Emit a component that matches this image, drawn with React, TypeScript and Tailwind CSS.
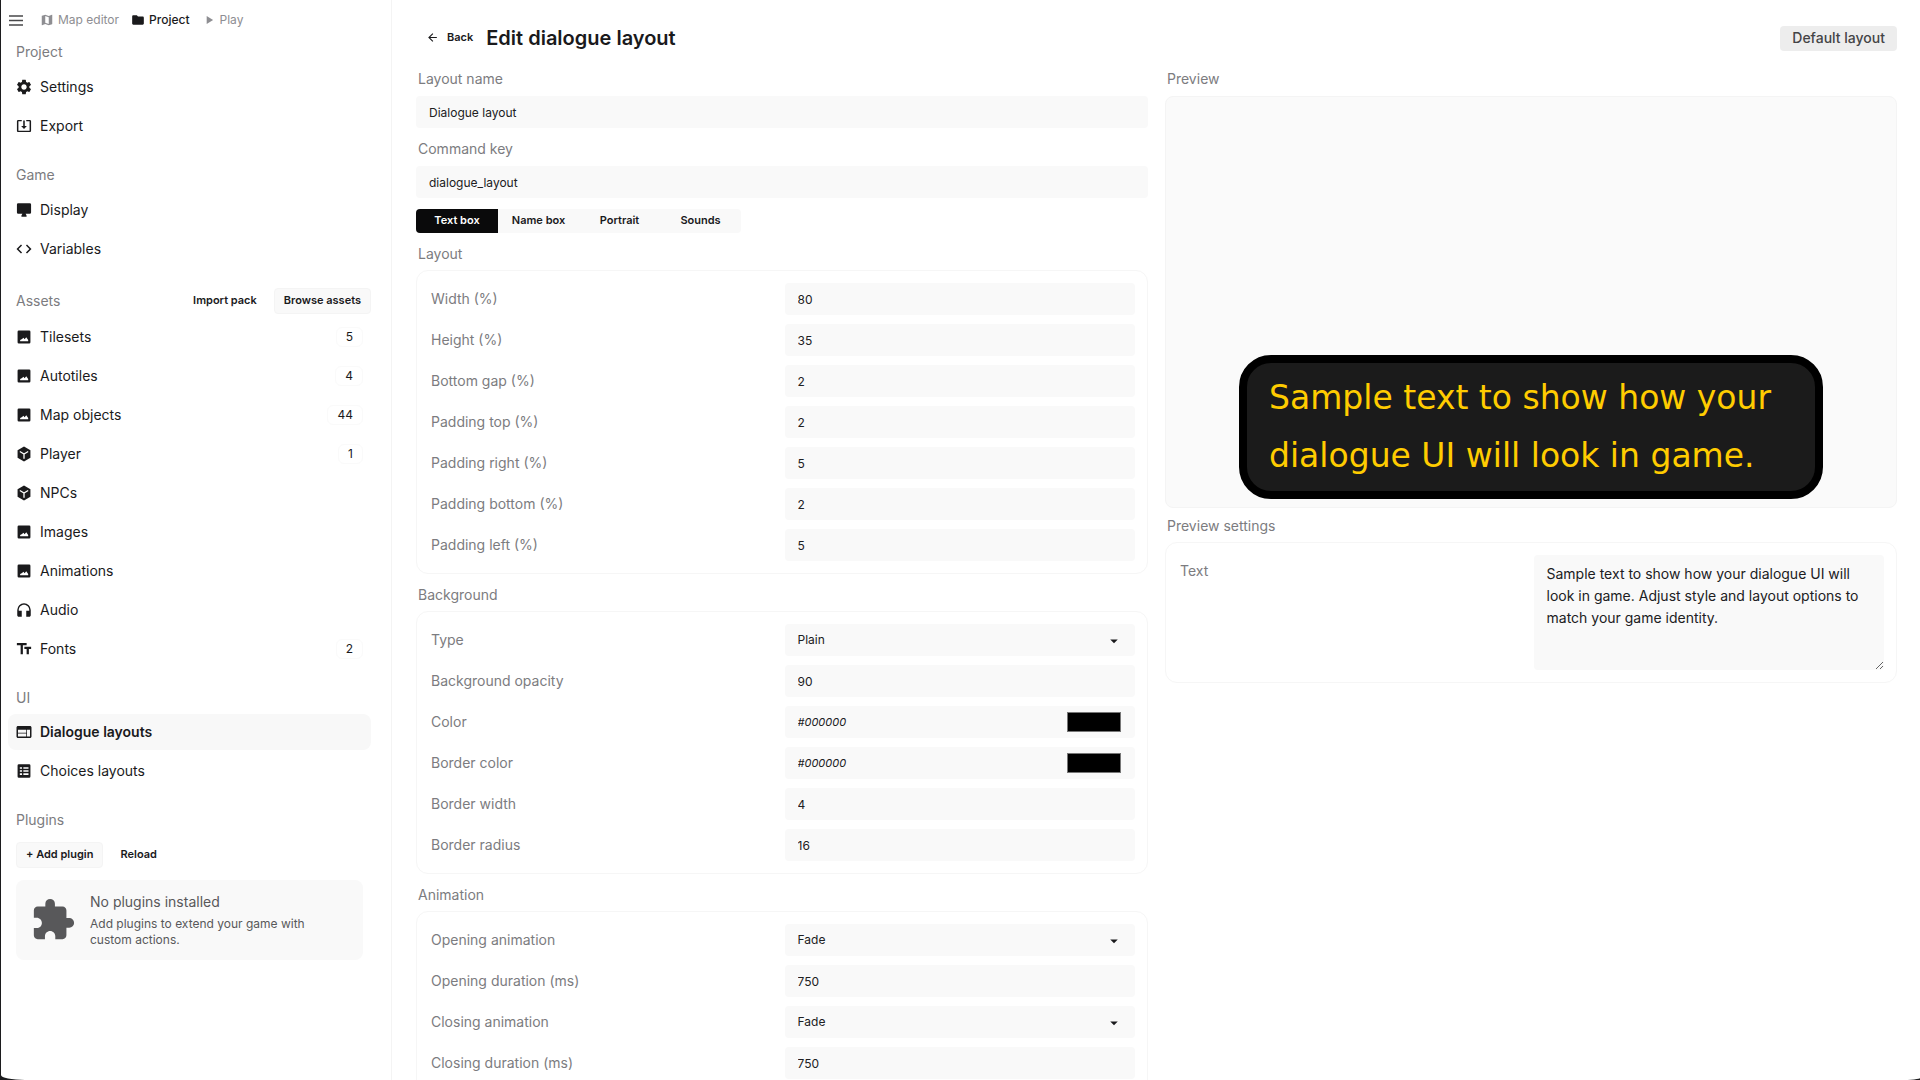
import React, { useId } from "react";
import {
  MdMap, MdFolder, MdPlayArrow, MdSettings, MdCode,
  MdHeadphones, MdTextFields, MdWeb, MdExtension, MdArrowBack, MdArrowDropDown,
} from "react-icons/md";

type IconProps = { className?: string };

function ExportIcon({ className }: IconProps) {
  return (
    <svg viewBox="-2 -2 28 28" className={className} fill="currentColor" aria-hidden="true">
      <path d="M12 16.500l4.500-4.500h-3.300V3.500h-2.400V12H7.500zM21 2.500h-5.500v2.300h5.200v14.400H3.300V4.800h5.200V2.500H3c-1.100 0-2 .9-2 2v15c0 1.100.9 2 2 2h18c1.100 0 2-.9 2-2v-15c0-1.100-.9-2-2-2z" />
    </svg>
  );
}

function DisplayIcon({ className }: IconProps) {
  return (
    <svg viewBox="-2 -2 28 28" className={className} fill="currentColor" aria-hidden="true">
      <path d="M3 1.500h18a2 2 0 0 1 2 2v12.500a2 2 0 0 1-2 2h-6.500l1.500 2.500v2H8v-2l1.500-2.500H3a2 2 0 0 1-2-2v-12.500a2 2 0 0 1 2-2z" />
    </svg>
  );
}

function PictureIcon({ className }: IconProps) {
  return (
    <svg viewBox="-2 -2 28 28" className={className} fill="currentColor" fillRule="evenodd" aria-hidden="true">
      <path d="M4 2h16a2 2 0 0 1 2 2v16a2 2 0 0 1-2 2H4a2 2 0 0 1-2-2V4a2 2 0 0 1 2-2z M6 18.500h12.500v-2l-3-4-2.500 3-2-2.500-2 2-3 1.500z" />
    </svg>
  );
}

function CubeIcon({ className }: IconProps) {
  return (
    <svg viewBox="-2 -2 28 28" className={className} aria-hidden="true">
      <path d="M12 .5l10 5.700v11.600L12 23.500 2 17.800V6.200z" fill="currentColor" />
      <path d="M5.500 8.200l6.500 3.800 6.500-3.800M12 12v7.500" stroke="white" strokeWidth="2" fill="none" />
    </svg>
  );
}

function ListBoxIcon({ className }: IconProps) {
  return (
    <svg viewBox="-2 -2 28 28" className={className} fill="currentColor" fillRule="evenodd" aria-hidden="true">
      <path d="M4 1.500h16a2 2 0 0 1 2 2v17a2 2 0 0 1-2 2H4a2 2 0 0 1-2-2v-17a2 2 0 0 1 2-2z M5.500 6v2.500H9V6z M11 6v2.500h8V6z M5.500 10.800v2.500H9v-2.500z M11 10.800v2.500h8v-2.500z M5.500 15.600v2.500H9v-2.500z M11 15.600v2.500h8v-2.500z" />
    </svg>
  );
}

type NavItem = { label: string; icon: React.ComponentType<IconProps>; count?: number; active?: boolean };

function NavLink({ label, icon: Icon, count, active }: NavItem) {
  return (
    <li>
      <a
        href="#"
        aria-current={active ? "page" : undefined}
        className={
          active
            ? "flex h-9 items-center gap-2 rounded-lg bg-[#f8f8f8] px-2 font-semibold"
            : "flex h-9 items-center gap-2 rounded-lg px-2"
        }
      >
        <span className="flex size-4 shrink-0 items-center justify-center">
          <Icon className="size-[18px] shrink-0" />
        </span>
        <span className="flex-1">{label}</span>
        {count !== undefined && (
          <span className="rounded-md border border-[#fafafa] px-[9px] text-xs leading-[18px]">{count}</span>
        )}
      </a>
    </li>
  );
}

function NavList({ items }: { items: NavItem[] }) {
  return (
    <ul className="flex flex-col gap-[3px]">
      {items.map((item) => (
        <NavLink key={item.label} {...item} />
      ))}
    </ul>
  );
}

const heading = "px-2 text-sm leading-5 text-[#7c7c80]";
const field = "h-8 w-full rounded bg-[#f9f9f9] px-[13px] text-xs text-[#202022] outline-none";
const plainButton = "h-[26px] px-[9px] text-[11px] font-semibold";
const filledButton = "h-[26px] rounded border border-[#f4f4f4] bg-[#f9f9f9] px-[9px] text-[11px] font-semibold";

function Sidebar() {
  return (
    <aside className="flex w-[391px] shrink-0 flex-col border-r border-[#f4f4f4] pl-[7px] pr-5">
      <nav className="flex h-10 items-center text-xs" aria-label="Main">
        <button aria-label="Menu" className="mr-4 w-4 text-[#48484a]">
          <svg viewBox="0 0 16 16" className="size-4" stroke="currentColor" strokeWidth="1.500" aria-hidden="true">
            <path d="M1 4h14M1 8.500h14M1 13h14" />
          </svg>
        </button>
        <a href="#" className="mr-3 flex items-center gap-1 text-[#8e8e92]"><MdMap className="size-[14px]" />Map editor</a>
        <a href="#" className="mr-3 flex items-center gap-1 font-medium"><MdFolder className="size-[14px]" />Project</a>
        <a href="#" className="flex items-center gap-1 text-[#8e8e92]"><MdPlayArrow className="size-[14px]" />Play</a>
      </nav>

      <h2 className={heading + " mt-[2px] mb-[7px]"}>Project</h2>
      <NavList items={[{ label: "Settings", icon: MdSettings }, { label: "Export", icon: ExportIcon }]} />

      <h2 className={heading + " mt-[21px] mb-[7px]"}>Game</h2>
      <NavList items={[{ label: "Display", icon: DisplayIcon }, { label: "Variables", icon: MdCode }]} />

      <div className="mt-[21px] mb-[5px] flex items-center gap-2">
        <h2 className={heading + " flex-1"}>Assets</h2>
        <button className={plainButton}>Import pack</button>
        <button className={filledButton}>Browse assets</button>
      </div>
      <NavList
        items={[
          { label: "Tilesets", icon: PictureIcon, count: 5 },
          { label: "Autotiles", icon: PictureIcon, count: 4 },
          { label: "Map objects", icon: PictureIcon, count: 44 },
          { label: "Player", icon: CubeIcon, count: 1 },
          { label: "NPCs", icon: CubeIcon },
          { label: "Images", icon: PictureIcon },
          { label: "Animations", icon: PictureIcon },
          { label: "Audio", icon: MdHeadphones },
          { label: "Fonts", icon: MdTextFields, count: 2 },
        ]}
      />

      <h2 className={heading + " mt-[21px] mb-[6px]"}>UI</h2>
      <NavList
        items={[
          { label: "Dialogue layouts", icon: MdWeb, active: true },
          { label: "Choices layouts", icon: ListBoxIcon },
        ]}
      />

      <h2 className={heading + " mt-[21px] mb-3"}>Plugins</h2>
      <div className="flex gap-2 px-2">
        <button className={filledButton}>+ Add plugin</button>
        <button className={plainButton}>Reload</button>
      </div>
      <div className="mx-2 mt-3 flex items-center gap-[14px] rounded-lg bg-[#f9f9f9] px-[14px] py-3 text-[#58585a]">
        <MdExtension className="size-[46px] shrink-0" />
        <div className="pr-8">
          <p className="text-sm leading-5">No plugins installed</p>
          <p className="mt-1 text-xs leading-4">Add plugins to extend your game with custom actions.</p>
        </div>
      </div>
    </aside>
  );
}

function Row({ label, children }: { label: string; children: (id: string) => React.ReactNode }) {
  const id = useId();
  return (
    <div className="grid grid-cols-2 items-center gap-[5px]">
      <label htmlFor={id} className="pl-[2px] text-sm text-[#7c7c80]">{label}</label>
      {children(id)}
    </div>
  );
}

function TextRow({ label, value }: { label: string; value: string }) {
  return <Row label={label}>{(id) => <input id={id} defaultValue={value} className={field} />}</Row>;
}

function SelectRow({ label, value }: { label: string; value: string }) {
  return (
    <Row label={label}>
      {(id) => (
        <div className="relative">
          <select id={id} defaultValue={value} className={field + " appearance-none"}>
            <option>{value}</option>
          </select>
          <MdArrowDropDown className="pointer-events-none absolute top-2 right-3 size-[18px]" />
        </div>
      )}
    </Row>
  );
}

function ColorRow({ label, value }: { label: string; value: string }) {
  return (
    <Row label={label}>
      {(id) => (
        <div className="flex h-8 items-center rounded bg-[#f9f9f9] pr-[14px]">
          <input id={id} defaultValue={value} className="h-8 min-w-0 flex-1 px-[13px] text-[11px] italic text-[#202022] outline-none" />
          <input
            type="color"
            aria-label={label + " swatch"}
            defaultValue={value}
            className="h-5 w-[54px] appearance-none border border-[#777] bg-black p-0 [&::-webkit-color-swatch]:border-0 [&::-webkit-color-swatch-wrapper]:p-0"
          />
        </div>
      )}
    </Row>
  );
}

function Group({ title, children }: { title: string; children: React.ReactNode }) {
  return (
    <section>
      <h2 className="mb-[6px] pl-[2px] text-sm leading-5 text-[#7c7c80]">{title}</h2>
      <div className="flex flex-col gap-[9px] rounded-xl border border-[#f6f6f6] p-3">{children}</div>
    </section>
  );
}

function Editor() {
  return (
    <div className="flex min-w-0 flex-1 flex-col">
      <label htmlFor="layout-name" className="pl-[2px] text-sm leading-5 text-[#7c7c80]">Layout name</label>
      <input id="layout-name" defaultValue="Dialogue layout" className={field + " mt-[7px]"} />
      <label htmlFor="command-key" className="mt-[11px] pl-[2px] text-sm leading-5 text-[#7c7c80]">Command key</label>
      <input id="command-key" defaultValue="dialogue_layout" className={field + " mt-[7px]"} />
      <div role="tablist" className="mt-[11px] mb-[11px] flex h-6 self-start overflow-hidden rounded bg-[#f9f9f9] text-[11px] font-semibold">
        <button role="tab" aria-selected="true" className="w-[82px] bg-[#0a0a0b] text-white">Text box</button>
        <button role="tab" aria-selected="false" className="w-[81px]">Name box</button>
        <button role="tab" aria-selected="false" className="w-[81px]">Portrait</button>
        <button role="tab" aria-selected="false" className="w-[81px]">Sounds</button>
      </div>
      <div className="flex flex-col gap-[11px]">
        <Group title="Layout">
          <TextRow label="Width (%)" value="80" />
          <TextRow label="Height (%)" value="35" />
          <TextRow label="Bottom gap (%)" value="2" />
          <TextRow label="Padding top (%)" value="2" />
          <TextRow label="Padding right (%)" value="5" />
          <TextRow label="Padding bottom (%)" value="2" />
          <TextRow label="Padding left (%)" value="5" />
        </Group>
        <Group title="Background">
          <SelectRow label="Type" value="Plain" />
          <TextRow label="Background opacity" value="90" />
          <ColorRow label="Color" value="#000000" />
          <ColorRow label="Border color" value="#000000" />
          <TextRow label="Border width" value="4" />
          <TextRow label="Border radius" value="16" />
        </Group>
        <Group title="Animation">
          <SelectRow label="Opening animation" value="Fade" />
          <TextRow label="Opening duration (ms)" value="750" />
          <SelectRow label="Closing animation" value="Fade" />
          <TextRow label="Closing duration (ms)" value="750" />
        </Group>
      </div>
    </div>
  );
}

function Preview() {
  return (
    <div className="flex min-w-0 flex-1 flex-col">
      <h2 className="mb-[7px] pl-[2px] text-sm leading-5 text-[#7c7c80]">Preview</h2>
      <div className="mb-2 flex aspect-[16/9] flex-col items-center justify-end rounded-lg border border-[#f4f4f4] bg-[#fafafa] pb-2">
        <div className="w-4/5 rounded-[32px] border-8 border-black bg-[#1b1b1b] px-[22px] py-[6px] font-['DejaVu_Sans',sans-serif] text-[33px] leading-[58px] whitespace-nowrap text-[#ffcc00]">
          <p>Sample text to show how your</p>
          <p>dialogue UI will look in game.</p>
        </div>
      </div>
      <section>
        <h2 className="mb-[6px] pl-[2px] text-sm leading-5 text-[#7c7c80]">Preview settings</h2>
        <div className="grid grid-cols-2 gap-[5px] rounded-xl border border-[#f6f6f6] p-3">
          <label htmlFor="sample" className="pt-[6px] pl-[2px] text-sm text-[#7c7c80]">Text</label>
          <textarea
            id="sample"
            className="h-[115px] rounded bg-[#f9f9f9] px-[13px] py-2 text-sm leading-[22px] text-[#202022] outline-none"
            defaultValue="Sample text to show how your dialogue UI will look in game. Adjust style and layout options to match your game identity."
          />
        </div>
      </section>
    </div>
  );
}

export default function App() {
  return (
    <div className="h-screen overflow-hidden bg-[#1c1c1e] pl-px">
      <div className="flex h-full overflow-hidden rounded-br-[20px_2px] rounded-bl-[24px_5px] bg-white font-['Inter',sans-serif] text-sm text-[#1a1a1c]">
        <Sidebar />
        <main className="min-w-0 flex-1 pr-[23px] pl-6">
          <header className="flex h-[69px] items-center pt-[7px]">
            <button className="flex items-center gap-2 px-[10px] text-[11px] font-semibold">
              <MdArrowBack className="size-[13px]" />Back
            </button>
            <h1 className="flex-1 pl-[3px] text-xl font-semibold">Edit dialogue layout</h1>
            <button className="h-[25px] rounded bg-[#ededed] px-3 text-sm font-medium text-[#444446]">Default layout</button>
          </header>
          <div className="flex gap-[17px]">
            <Editor />
            <Preview />
          </div>
        </main>
      </div>
    </div>
  );
}
